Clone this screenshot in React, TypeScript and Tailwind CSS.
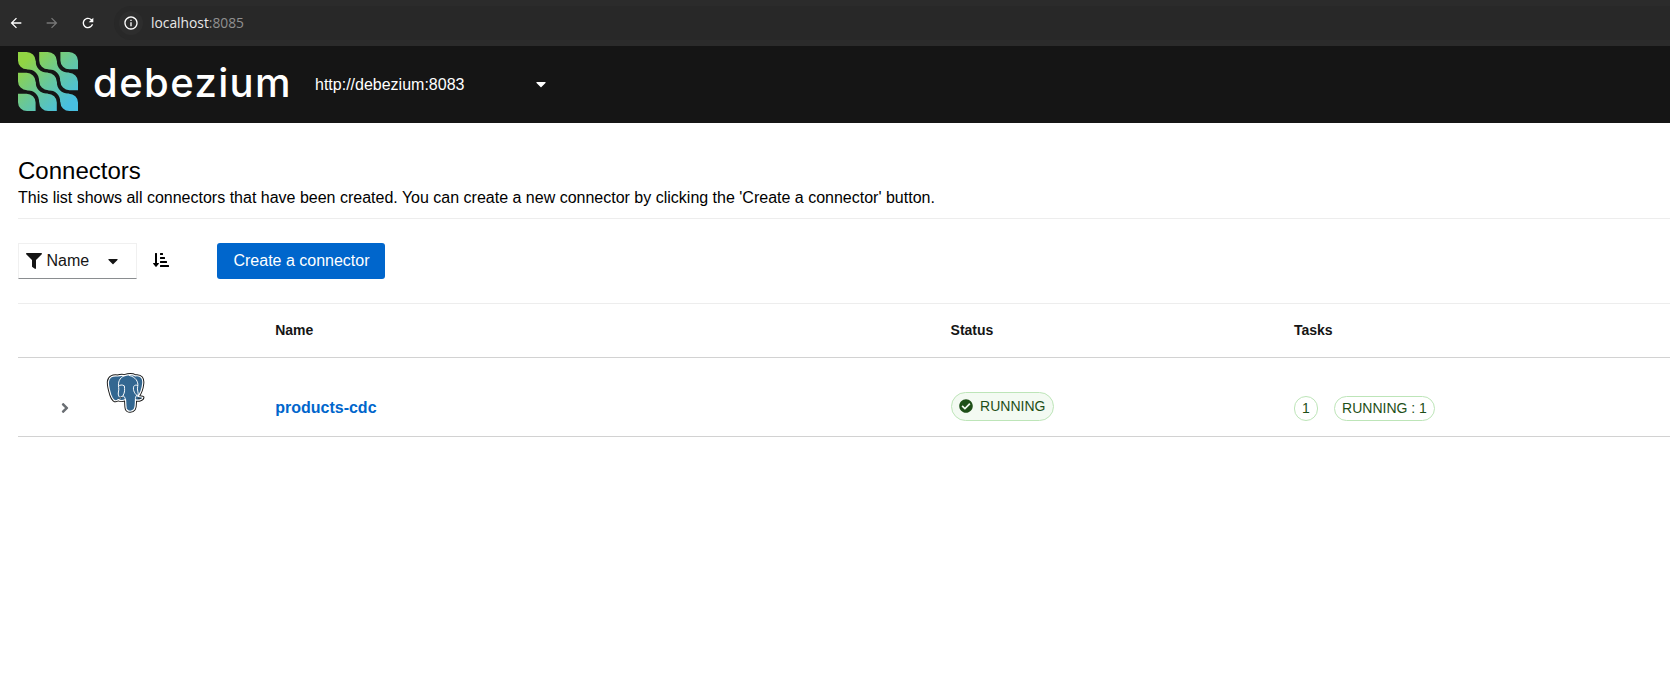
import { FaAngleRight, FaCaretDown, FaCheckCircle, FaFilter, FaSortAmountDownAlt } from "react-icons/fa";
import { MdArrowBack, MdArrowForward, MdInfoOutline, MdRefresh } from "react-icons/md";

const cells = [0, 21.2, 42.4];
const bridges = [
  [0, 0],
  [21.2, 21.2],
  [21.2, 0],
  [0, 21.2],
];

function DebeziumMark() {
  return (
    <svg className="h-[59px] w-[60px] shrink-0" viewBox="0 0 60 60" preserveAspectRatio="none">
      <defs>
        <linearGradient id="mark" gradientUnits="userSpaceOnUse" x1="8" y1="8" x2="52" y2="52">
          <stop offset="0" stopColor="#91d443" />
          <stop offset="0.5" stopColor="#68c79a" />
          <stop offset="1" stopColor="#48bfe0" />
        </linearGradient>
      </defs>
      <g fill="url(#mark)">
        <path
          d={cells
            .flatMap((y) => cells.map((x) => `M${x} ${y}h8.6a9 9 0 0 1 9 9v8.6h-8.6a9 9 0 0 1-9-9z`))
            .join("")}
        />
        <path
          d={bridges
            .map(
              ([x, y]) =>
                `M${x + 17.6} ${y + 9}C${x + 17.6} ${y + 16} ${x + 22} ${y + 21.2} ${x + 30} ${y + 21.2}L${x + 21.2} ${y + 30}C${x + 21.2} ${y + 22} ${x + 16} ${y + 17.6} ${x + 9} ${y + 17.6}z`,
            )
            .join("")}
        />
      </g>
    </svg>
  );
}

const headPath =
  "M3.5 9C4 4 8 2.5 13 3.2C16 2.2 18 2.3 20 2.8C24 1.5 29 1.8 31 3C37 2 39.5 6 38.5 12C38 17 36.5 21 34 24.500C36 25.600 38 24.800 38.800 25.500C38.500 28.500 34 29 31.200 28C31 32 31.500 35 30 38C28 41 23 41 21.800 37.500C21 34 21.500 31 21 27.800C18 29.500 15 28.800 13.500 28C10 31 7.500 27.500 6 23C4.500 18 3.200 13 3.500 9Z";

function PostgresLogo() {
  return (
    <svg className="h-[40px] w-[41px]" viewBox="0 0 42 42" preserveAspectRatio="none" fill="none" strokeLinejoin="round" strokeLinecap="round">
      <path d={headPath} fill="#222" stroke="#1c1c1c" strokeWidth="3.200" />
      <path d={headPath} fill="#336791" stroke="#fff" strokeWidth="1.200" />
      <g stroke="#fff" strokeWidth="1">
        <path d="M20 2.800C14.500 5 13.200 10 14 15C14.800 19 12.500 21 14.200 24.500C15.500 26.500 17.500 25 18.500 23.500C20.500 20.500 20.200 17 19.800 13.500C17.500 12 15.500 12.600 14 13.500" />
        <path d="M25 2.600C31 4 34.500 9 33.500 14C32.500 18 34.500 20 34 24.500C31 23 28 18 29.500 14C30.500 12.500 32 12.500 33.500 13" />
        <path d="M21 27.800C20.500 25.500 19.500 24.500 18.500 23.800C17 25.500 15.500 27 13.500 28" />
        <path d="M31.200 28C30.800 26 31.500 24.500 32.500 23.500" />
      </g>
      <path d="M14.500 26.500L17 25.800M34 26.500L36.800 26.600" stroke="#222" strokeWidth="0.900" />
    </svg>
  );
}

function BrowserBar() {
  return (
    <div className="flex h-[46px] items-center bg-[#2b2b2b] text-white">
      <div className="flex w-[114px] shrink-0 items-center gap-5 pl-2">
        <MdArrowBack className="size-4" />
        <MdArrowForward className="size-4 text-[#777]" />
        <MdRefresh className="size-4" />
      </div>
      <div className="flex h-[34px] flex-1 items-center rounded-l-full bg-[#282828] pl-[5px]">
        <span className="flex size-6 items-center justify-center rounded-full bg-[#2d2d2d]">
          <MdInfoOutline className="size-4" />
        </span>
        <span className="ml-2 font-['Open_Sans',sans-serif] text-[13.8px] text-[#e8e8e8]">
          localhost<span className="text-[#909090]">:8085</span>
        </span>
      </div>
    </div>
  );
}

function Masthead() {
  return (
    <header className="flex h-[77px] items-start bg-[#151515] pl-[18px] text-white">
      <div className="flex w-[297px] shrink-0 items-start pt-[6px]">
        <DebeziumMark />
        <span className="ml-[15px] pt-[6px] font-['Inter',sans-serif] text-[40px] leading-[50px] font-[550] tracking-[1.400px]">
          debezium
        </span>
      </div>
      <div className="flex h-[77px] w-[234px] items-center justify-between">
        <span>http://debezium:8083</span>
        <FaCaretDown className="mb-px size-4" />
      </div>
    </header>
  );
}

export default function App() {
  return (
    <div className="h-[674px] overflow-hidden bg-white font-['Liberation_Sans',Arial,sans-serif] text-base text-[#151515]">
      <BrowserBar />
      <Masthead />
      <main className="pl-[18px]">
        <div className="h-24 border-b border-[#ededed] pt-[33px] text-black">
          <h1 className="text-2xl leading-[30px]">Connectors</h1>
          <p className="leading-6">
            This list shows all connectors that have been created. You can create a new connector by clicking the
            &apos;Create a connector&apos; button.
          </p>
        </div>
        <div className="flex h-[85px] items-start border-b border-[#ededed] pt-6">
          <button className="flex h-9 w-[119px] items-center border border-b-[#8a8d90] border-[#f0f0f0] pl-[7px]">
            <FaFilter className="size-4" />
            <span className="ml-[4.500px]">Name</span>
            <FaCaretDown className="ml-[15.500px] size-4" />
          </button>
          <button className="ml-4 flex h-9 items-center text-black">
            <FaSortAmountDownAlt className="-mt-0.5 size-4" />
          </button>
          <button className="ml-12 h-9 w-[168px] rounded-[3px] bg-[#0066cc] pl-px text-white">Create a connector</button>
        </div>
        <div className="grid h-[54px] grid-cols-[257.200px_675.400px_343.400px_1fr] items-center border-b border-[#d2d2d2] pb-0.5 text-sm font-bold">
          <span />
          <span>Name</span>
          <span>Status</span>
          <span>Tasks</span>
        </div>
        <div className="grid h-[79px] grid-cols-[257.200px_675.400px_343.400px_1fr] items-start border-b border-[#d2d2d2]">
          <div className="flex items-start pt-[14px] pl-[39px]">
            <FaAngleRight className="mt-[28px] size-4 text-[#6a6e73]" />
            <div className="mt-px ml-[32px]">
              <PostgresLogo />
            </div>
          </div>
          <a className="pt-[38px] font-bold text-[#0066cc]">products-cdc</a>
          <div className="flex pt-[34px]">
            <span className="flex h-[29px] w-[103px] items-center rounded-full border border-[#bde5b8] bg-[#f3faf2] pb-px pl-[7px] text-sm text-[#1e4f18]">
              <FaCheckCircle className="size-[14px]" />
              <span className="ml-[7.500px]">RUNNING</span>
            </span>
          </div>
          <div className="flex gap-4 pt-[38px] text-sm text-[#1e4f18]">
            <span className="flex h-[25px] w-6 items-center justify-center rounded-full border border-[#bde5b8] pb-px">1</span>
            <span className="flex h-[25px] w-[101px] items-center justify-center rounded-full border border-[#bde5b8] pb-px">
              RUNNING : 1
            </span>
          </div>
        </div>
      </main>
    </div>
  );
}
